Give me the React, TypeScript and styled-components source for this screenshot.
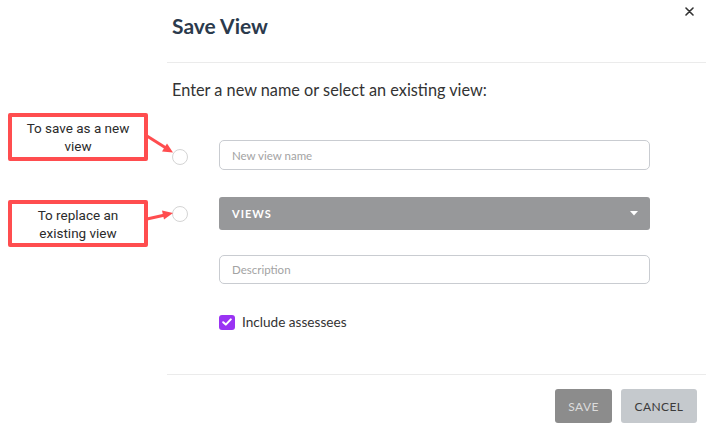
import React, { useState } from 'react';
import styled, { createGlobalStyle } from 'styled-components';

const GlobalStyle = createGlobalStyle`
  html, body {
    margin: 0;
    padding: 0;
    background: #ffffff;
    font-family: 'Lato', 'Open Sans', sans-serif;
  }
  * { box-sizing: border-box; }
`;

const Page = styled.div`
  position: relative;
  width: 720px;
  height: 436px;
  overflow: hidden;
  background: #ffffff;
`;

const Modal = styled.div`
  margin-left: 167px;
  width: 539px;
  display: flex;
  flex-direction: column;
`;

const Header = styled.div`
  height: 63px;
  display: flex;
  justify-content: space-between;
  align-items: flex-start;
  border-bottom: 1px solid #ebebeb;
`;

const Title = styled.h2`
  margin: 13px 0 0 5px;
  font-size: 21px;
  line-height: 26px;
  font-weight: 700;
  color: #2b3a4c;
`;

const CloseButton = styled.button`
  margin: 5px 11px 0 0;
  padding: 0;
  border: none;
  background: none;
  width: 12px;
  height: 12px;
  display: flex;
  align-items: center;
  justify-content: center;
  cursor: pointer;
`;

const Body = styled.div`
  padding-left: 5px;
`;

const Prompt = styled.p`
  margin: 17px 0 0 0;
  font-size: 16.3px;
  line-height: 20px;
  color: #333333;
`;

const Form = styled.div`
  margin-top: 40px;
  display: grid;
  grid-template-columns: 16px 431px;
  column-gap: 31px;
  align-items: center;
`;

const Radio = styled.span<{ $shift?: number }>`
  width: 16px;
  height: 16px;
  border-radius: 50%;
  border: 1px solid #d4d4d4;
  background: #fff;
  margin-top: ${(p) => p.$shift ?? 0}px;
`;

const TextInput = styled.input<{ $h?: number }>`
  grid-column: 2;
  width: 431px;
  height: ${(p) => p.$h ?? 30}px;
  border: 1px solid #c9ccd1;
  border-radius: 5px;
  padding: 0 12px;
  font-family: 'Lato', sans-serif;
  font-size: 11.5px;
  color: #333;
  outline: none;
  &::placeholder { color: #a3a3a3; }
`;

const Spacer = styled.div<{ $h: number }>`
  grid-column: 1 / span 2;
  height: ${(p) => p.$h}px;
`;

const Dropdown = styled.button`
  grid-column: 2;
  height: 33px;
  width: 431px;
  border: none;
  border-radius: 3px;
  background: #97989a;
  color: #ffffff;
  display: flex;
  align-items: center;
  justify-content: space-between;
  padding: 0 12px 0 13px;
  font-family: 'Lato', sans-serif;
  font-weight: 700;
  font-size: 11px;
  letter-spacing: 1px;
  cursor: pointer;
`;

const CheckRow = styled.label`
  grid-column: 2;
  display: flex;
  align-items: center;
  gap: 7px;
  font-size: 13.6px;
  color: #333;
  cursor: pointer;
`;

const CheckBox = styled.span<{ $on: boolean }>`
  width: 16px;
  height: 15px;
  border-radius: 3px;
  background: ${(p) => (p.$on ? '#9a33f3' : '#fff')};
  border: ${(p) => (p.$on ? 'none' : '1px solid #ccc')};
  display: flex;
  align-items: center;
  justify-content: center;
`;

const Footer = styled.div`
  margin-top: 44px;
  border-top: 1px solid #ebebeb;
  padding: 14px 9px 0 0;
  display: flex;
  justify-content: flex-end;
  gap: 9px;
`;

const Button = styled.button<{ $variant: 'save' | 'cancel' }>`
  height: 34px;
  padding: 0;
  width: ${(p) => (p.$variant === 'save' ? 57 : 76)}px;
  border: none;
  border-radius: 3px;
  background: ${(p) => (p.$variant === 'save' ? '#8c8c8c' : '#c5c9cd')};
  color: ${(p) => (p.$variant === 'save' ? '#dcdcdc' : '#3b3b3b')};
  font-family: 'Lato', sans-serif;
  font-size: 12px;
  letter-spacing: 0.4px;
  cursor: pointer;
`;

const Callout = styled.div<{ $top: number; $h: number }>`
  position: absolute;
  left: 8px;
  top: ${(p) => p.$top}px;
  width: 140px;
  height: ${(p) => p.$h}px;
  border: 4px solid #ff4d4f;
  border-radius: 2px;
  background: #fff;
  display: flex;
  align-items: center;
  justify-content: center;
  text-align: center;
  font-family: 'Roboto', sans-serif;
  font-size: 13.5px;
  line-height: 18px;
  color: #2b2b2b;
`;

const ArrowLayer = styled.svg`
  position: absolute;
  left: 0;
  top: 0;
  pointer-events: none;
`;

export default function App() {
  const [include, setInclude] = useState(true);

  return (
    <Page>
      <GlobalStyle />
      <Modal>
        <Header>
          <Title>Save View</Title>
          <CloseButton aria-label="Close">
            <svg width="9" height="9" viewBox="0 0 9 9">
              <path d="M1 1 L8 8 M8 1 L1 8" stroke="#333" strokeWidth="1.6" strokeLinecap="round" />
            </svg>
          </CloseButton>
        </Header>
        <Body>
          <Prompt>Enter a new name or select an existing view:</Prompt>
          <Form>
            <Radio $shift={3} />
            <TextInput placeholder="New view name" />
            <Spacer $h={27} />
            <Radio />
            <Dropdown>
              <span>VIEWS</span>
              <svg width="8" height="5" viewBox="0 0 8 5">
                <path d="M0 0 H8 L4 4.5 Z" fill="#ffffff" />
              </svg>
            </Dropdown>
            <Spacer $h={25} />
            <TextInput placeholder="Description" $h={29} />
            <Spacer $h={30} />
            <CheckRow onClick={() => setInclude(!include)}>
              <CheckBox $on={include}>
                {include && (
                  <svg width="10" height="8" viewBox="0 0 10 8">
                    <path d="M1.2 4.2 L3.8 6.6 L8.8 1.4" stroke="#fff" strokeWidth="2" fill="none" strokeLinecap="round" strokeLinejoin="round" />
                  </svg>
                )}
              </CheckBox>
              Include assessees
            </CheckRow>
          </Form>
        </Body>
        <Footer>
          <Button $variant="save">SAVE</Button>
          <Button $variant="cancel">CANCEL</Button>
        </Footer>
      </Modal>

      <Callout $top={113} $h={48}>
        To save as a new
        <br />
        view
      </Callout>
      <Callout $top={200} $h={47}>
        To replace an
        <br />
        existing view
      </Callout>
      <ArrowLayer width="720" height="436" viewBox="0 0 720 436">
        <line x1="147" y1="136" x2="166" y2="148" stroke="#ff4d4f" strokeWidth="3" />
        <path d="M173 152.5 L162 151.5 L167 143.5 Z" fill="#ff4d4f" />
        <line x1="147" y1="219" x2="165" y2="215" stroke="#ff4d4f" strokeWidth="3" />
        <path d="M173 213 L164 219.5 L162 210.5 Z" fill="#ff4d4f" />
      </ArrowLayer>
    </Page>
  );
}
